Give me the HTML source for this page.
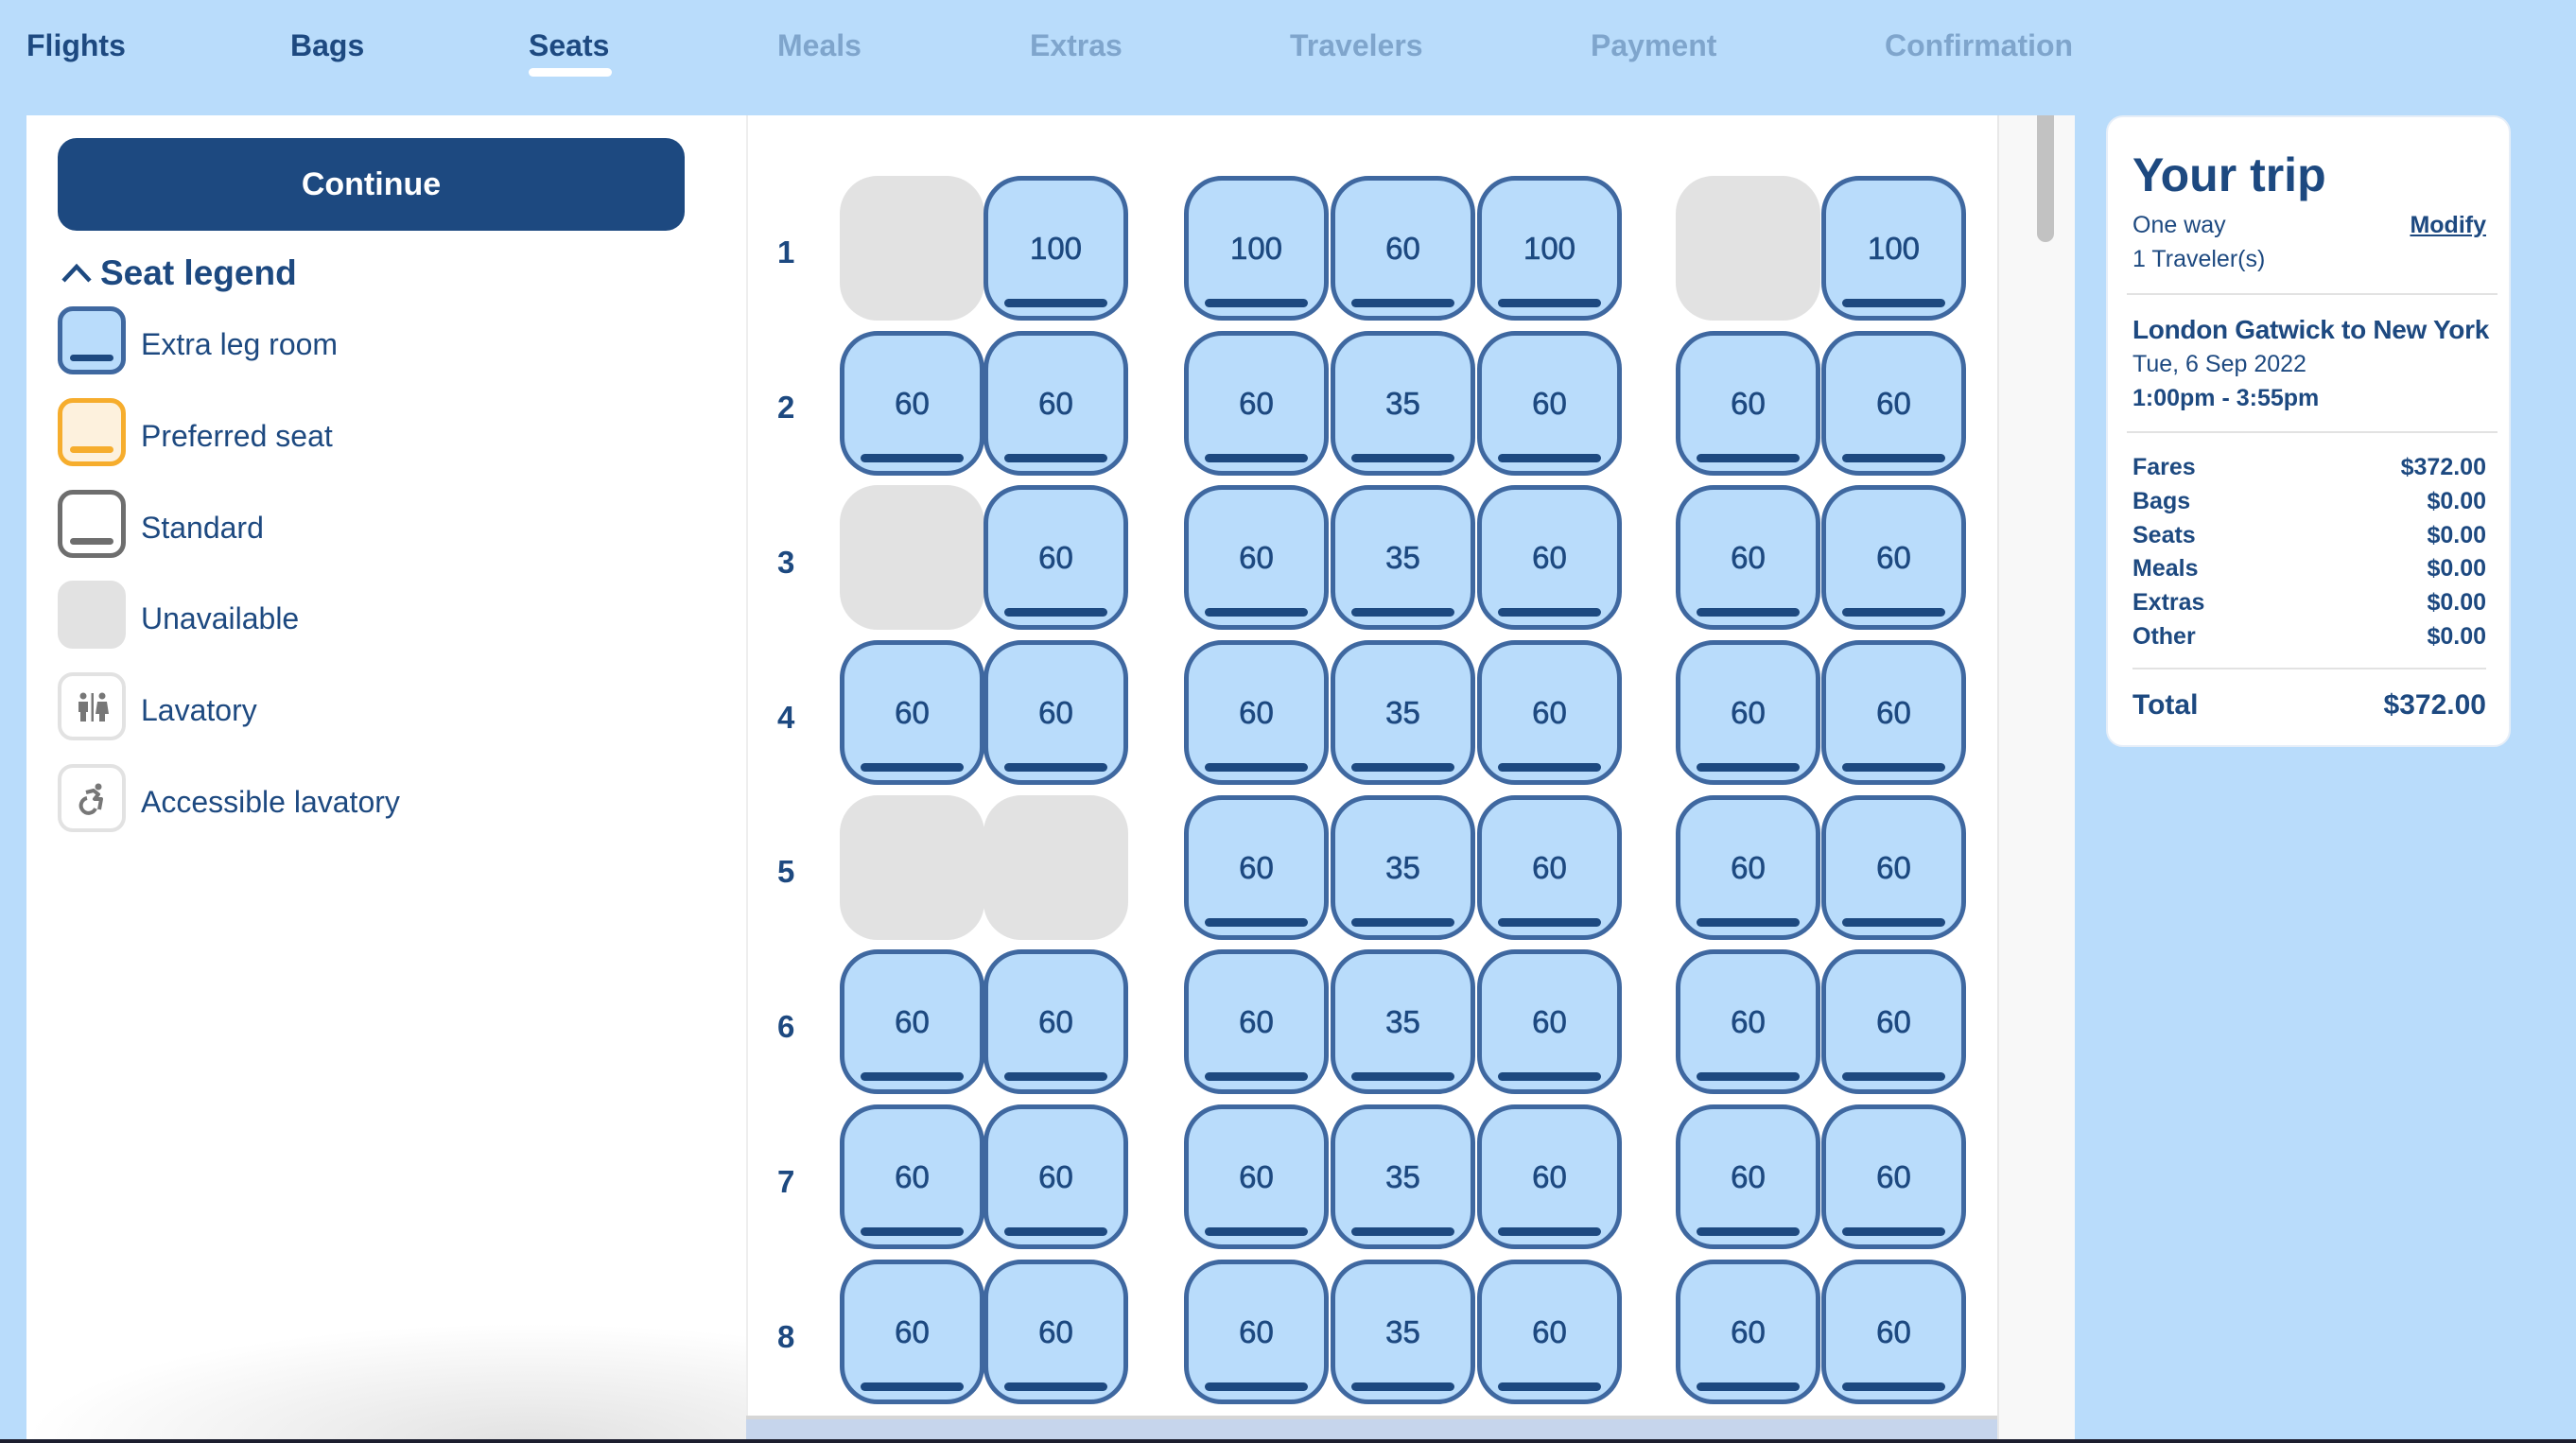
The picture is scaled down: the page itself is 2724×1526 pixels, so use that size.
<!DOCTYPE html>
<html><head><meta charset="utf-8"><style>
*{margin:0;padding:0;box-sizing:border-box}
body{width:2724px;height:1526px;overflow:hidden;background:#b9dcfb;font-family:"Liberation Sans",sans-serif;color:#1d4980;position:relative}
.nav{position:absolute;top:0;left:0;height:122px;width:100%}
.nav span{position:absolute;top:30px;font-size:32px;font-weight:bold;color:#1d4980}
.nav span.off{color:#7fa5cc}
.ul{position:absolute;left:559px;top:72px;width:88px;height:9px;background:#fff;border-radius:5px}
.left{position:absolute;left:28px;top:122px;width:761px;height:1404px;background:#fff}
.btn{position:absolute;left:61px;top:146px;width:663px;height:98px;background:#1d4980;border-radius:20px;color:#fff;font-size:34px;font-weight:bold;text-align:center;line-height:98px}
.lh{position:absolute;left:64px;top:268px;font-size:37px;font-weight:bold}
.lh svg{position:absolute;left:0;top:10px}
.lh b{margin-left:42px}
.li{position:absolute;left:61px;width:72px;height:72px;border-radius:16px;border:5px solid #3f68a0}
.li i{position:absolute;left:8px;right:8px;bottom:9px;height:7px;border-radius:4px;background:#1d4980}
.lt{position:absolute;left:149px;font-size:32px;color:#1d4980;line-height:40px}
.mid{position:absolute;left:789px;top:122px;width:1323px;height:1404px;background:#fff;border-left:2px solid #eee}
.sc{position:absolute;left:2112px;top:122px;width:82px;height:1404px;background:#f8f8f8;border-left:2px solid #e8e8e8}
.thumb{position:absolute;left:2154px;top:122px;width:18px;height:134px;border-radius:0 0 9px 9px;background:#c2c2c2}
.seat{position:absolute;width:153px;height:153px;border:5px solid #3f68a0;border-radius:40px;background:#b9dcfb;text-align:center;line-height:144px;font-size:33px;color:#1d4980;-webkit-text-stroke:0.6px #1d4980}
.seat i{position:absolute;left:17px;right:17px;bottom:9px;height:9px;border-radius:5px;background:#1d4980}
.seat.u{border-color:#e2e2e2;background:#e2e2e2}
.rn{position:absolute;left:822px;font-size:33px;font-weight:bold;color:#1d4980}
.card{position:absolute;left:2227px;top:122px;width:428px;height:668px;background:#fff;border-radius:18px;border:2px solid #e6eef8}
.card .t{position:absolute;left:26px;white-space:nowrap}
.card .r{position:absolute;right:24px;white-space:nowrap}
.hr{position:absolute;height:2px;background:#e2e2e2}
.strip{position:absolute;left:789px;top:1497px;width:1323px;height:29px;background:#c6d5ec;border-top:4px solid #d6d6d6}
.shadow{position:absolute;left:28px;top:1400px;width:761px;height:126px;background:radial-gradient(ellipse 70% 100% at 70% 100%,#e2e2e2,rgba(255,255,255,0))}
.bot{position:absolute;left:0;bottom:0;width:100%;height:4px;background:#1c1e2e}
</style></head><body>
<div class="nav">
<span style="left:28px">Flights</span>
<span style="left:307px">Bags</span>
<span style="left:559px">Seats</span>
<span class="off" style="left:822px">Meals</span>
<span class="off" style="left:1089px">Extras</span>
<span class="off" style="left:1364px">Travelers</span>
<span class="off" style="left:1682px">Payment</span>
<span class="off" style="left:1993px">Confirmation</span>
<div class="ul"></div>
</div>
<div class="left"></div>
<div class="shadow"></div>
<div class="btn">Continue</div>
<div class="lh"><svg width="34" height="22" viewBox="0 0 34 22"><path d="M3 19 L17 4 L31 19" fill="none" stroke="#1d4980" stroke-width="4.5"/></svg><b>Seat legend</b></div>

<div class="li" style="top:324px;background:#b9dcfb"><i></i></div><div class="lt" style="top:344px">Extra leg room</div>
<div class="li" style="top:421px;background:#fdf1dd;border-color:#f6ad2d"><i style="background:#f6ad2d"></i></div><div class="lt" style="top:441px">Preferred seat</div>
<div class="li" style="top:518px;background:#fff;border-color:#6e6e6e"><i style="background:#6e6e6e"></i></div><div class="lt" style="top:538px">Standard</div>
<div class="li" style="top:614px;background:#e2e2e2;border-color:#e2e2e2"></div><div class="lt" style="top:634px">Unavailable</div>
<div class="li" style="top:711px;background:#fff;border-color:#e2e2e2;border-width:4px"><svg style="position:absolute;left:16px;top:16px" width="34" height="34" viewBox="0 0 34 34"><circle cx="7" cy="5" r="3.5" fill="#777"/><path d="M2 11h10v11h-2v10h-6v-10h-2z" fill="#777"/><rect x="15.5" y="2" width="2.5" height="30" fill="#777"/><circle cx="27" cy="5" r="3.5" fill="#777"/><path d="M22 11h10l2 13h-4v8h-6v-8h-4z" fill="#777"/></svg></div><div class="lt" style="top:731px">Lavatory</div>
<div class="li" style="top:808px;background:#fff;border-color:#e2e2e2;border-width:4px"><svg style="position:absolute;left:18px;top:16px" width="32" height="34" viewBox="0 0 32 34"><circle cx="21" cy="4" r="3.5" fill="#777"/><path d="M8 10l8-2 5 4-4 5h7l-2 11" fill="none" stroke="#777" stroke-width="4" stroke-linejoin="round"/><path d="M9 16a8 8 0 1 0 9 11" fill="none" stroke="#777" stroke-width="4"/></svg></div><div class="lt" style="top:828px">Accessible lavatory</div>

<div class="mid"></div>
<div class="sc"></div><div class="thumb"></div>

<div class="rn" style="top:248px">1</div>
<div class="rn" style="top:412px">2</div>
<div class="rn" style="top:576px">3</div>
<div class="rn" style="top:740px">4</div>
<div class="rn" style="top:903px">5</div>
<div class="rn" style="top:1067px">6</div>
<div class="rn" style="top:1231px">7</div>
<div class="rn" style="top:1395px">8</div>

<div class="seat u" style="left:888px;top:186px"></div>
<div class="seat" style="left:1040px;top:186px">100<i></i></div>
<div class="seat" style="left:1252px;top:186px">100<i></i></div>
<div class="seat" style="left:1407px;top:186px">60<i></i></div>
<div class="seat" style="left:1562px;top:186px">100<i></i></div>
<div class="seat u" style="left:1772px;top:186px"></div>
<div class="seat" style="left:1926px;top:186px">100<i></i></div>

<div class="seat" style="left:888px;top:350px">60<i></i></div>
<div class="seat" style="left:1040px;top:350px">60<i></i></div>
<div class="seat" style="left:1252px;top:350px">60<i></i></div>
<div class="seat" style="left:1407px;top:350px">35<i></i></div>
<div class="seat" style="left:1562px;top:350px">60<i></i></div>
<div class="seat" style="left:1772px;top:350px">60<i></i></div>
<div class="seat" style="left:1926px;top:350px">60<i></i></div>

<div class="seat u" style="left:888px;top:513px"></div>
<div class="seat" style="left:1040px;top:513px">60<i></i></div>
<div class="seat" style="left:1252px;top:513px">60<i></i></div>
<div class="seat" style="left:1407px;top:513px">35<i></i></div>
<div class="seat" style="left:1562px;top:513px">60<i></i></div>
<div class="seat" style="left:1772px;top:513px">60<i></i></div>
<div class="seat" style="left:1926px;top:513px">60<i></i></div>

<div class="seat" style="left:888px;top:677px">60<i></i></div>
<div class="seat" style="left:1040px;top:677px">60<i></i></div>
<div class="seat" style="left:1252px;top:677px">60<i></i></div>
<div class="seat" style="left:1407px;top:677px">35<i></i></div>
<div class="seat" style="left:1562px;top:677px">60<i></i></div>
<div class="seat" style="left:1772px;top:677px">60<i></i></div>
<div class="seat" style="left:1926px;top:677px">60<i></i></div>

<div class="seat u" style="left:888px;top:841px"></div>
<div class="seat u" style="left:1040px;top:841px"></div>
<div class="seat" style="left:1252px;top:841px">60<i></i></div>
<div class="seat" style="left:1407px;top:841px">35<i></i></div>
<div class="seat" style="left:1562px;top:841px">60<i></i></div>
<div class="seat" style="left:1772px;top:841px">60<i></i></div>
<div class="seat" style="left:1926px;top:841px">60<i></i></div>

<div class="seat" style="left:888px;top:1004px">60<i></i></div>
<div class="seat" style="left:1040px;top:1004px">60<i></i></div>
<div class="seat" style="left:1252px;top:1004px">60<i></i></div>
<div class="seat" style="left:1407px;top:1004px">35<i></i></div>
<div class="seat" style="left:1562px;top:1004px">60<i></i></div>
<div class="seat" style="left:1772px;top:1004px">60<i></i></div>
<div class="seat" style="left:1926px;top:1004px">60<i></i></div>

<div class="seat" style="left:888px;top:1168px">60<i></i></div>
<div class="seat" style="left:1040px;top:1168px">60<i></i></div>
<div class="seat" style="left:1252px;top:1168px">60<i></i></div>
<div class="seat" style="left:1407px;top:1168px">35<i></i></div>
<div class="seat" style="left:1562px;top:1168px">60<i></i></div>
<div class="seat" style="left:1772px;top:1168px">60<i></i></div>
<div class="seat" style="left:1926px;top:1168px">60<i></i></div>

<div class="seat" style="left:888px;top:1332px">60<i></i></div>
<div class="seat" style="left:1040px;top:1332px">60<i></i></div>
<div class="seat" style="left:1252px;top:1332px">60<i></i></div>
<div class="seat" style="left:1407px;top:1332px">35<i></i></div>
<div class="seat" style="left:1562px;top:1332px">60<i></i></div>
<div class="seat" style="left:1772px;top:1332px">60<i></i></div>
<div class="seat" style="left:1926px;top:1332px">60<i></i></div>

<div class="strip"></div>

<div class="card">
<div class="t" style="top:32px;font-size:50px;font-weight:bold">Your trip</div>
<div class="t" style="top:100px;font-size:25px">One way</div>
<div class="r" style="top:100px;font-size:25px;font-weight:bold;text-decoration:underline">Modify</div>
<div class="t" style="top:136px;font-size:25px">1 Traveler(s)</div>
<div class="hr" style="left:20px;right:12px;top:186px"></div>
<div class="t" style="top:209px;font-size:28px;font-weight:bold;letter-spacing:-0.3px">London Gatwick to New York</div>
<div class="t" style="top:247px;font-size:25px">Tue, 6 Sep 2022</div>
<div class="t" style="top:283px;font-size:25px;font-weight:bold">1:00pm - 3:55pm</div>
<div class="hr" style="left:20px;right:12px;top:332px"></div>
<div class="t" style="top:356px;font-size:25px;font-weight:bold">Fares</div><div class="r" style="top:356px;font-size:25px;font-weight:bold">$372.00</div>
<div class="t" style="top:392px;font-size:25px;font-weight:bold">Bags</div><div class="r" style="top:392px;font-size:25px;font-weight:bold">$0.00</div>
<div class="t" style="top:428px;font-size:25px;font-weight:bold">Seats</div><div class="r" style="top:428px;font-size:25px;font-weight:bold">$0.00</div>
<div class="t" style="top:463px;font-size:25px;font-weight:bold">Meals</div><div class="r" style="top:463px;font-size:25px;font-weight:bold">$0.00</div>
<div class="t" style="top:499px;font-size:25px;font-weight:bold">Extras</div><div class="r" style="top:499px;font-size:25px;font-weight:bold">$0.00</div>
<div class="t" style="top:535px;font-size:25px;font-weight:bold">Other</div><div class="r" style="top:535px;font-size:25px;font-weight:bold">$0.00</div>
<div class="hr" style="left:26px;right:24px;top:582px"></div>
<div class="t" style="top:605px;font-size:30px;font-weight:bold">Total</div><div class="r" style="top:605px;font-size:30px;font-weight:bold">$372.00</div>
</div>
<div class="bot"></div>
</body></html>
